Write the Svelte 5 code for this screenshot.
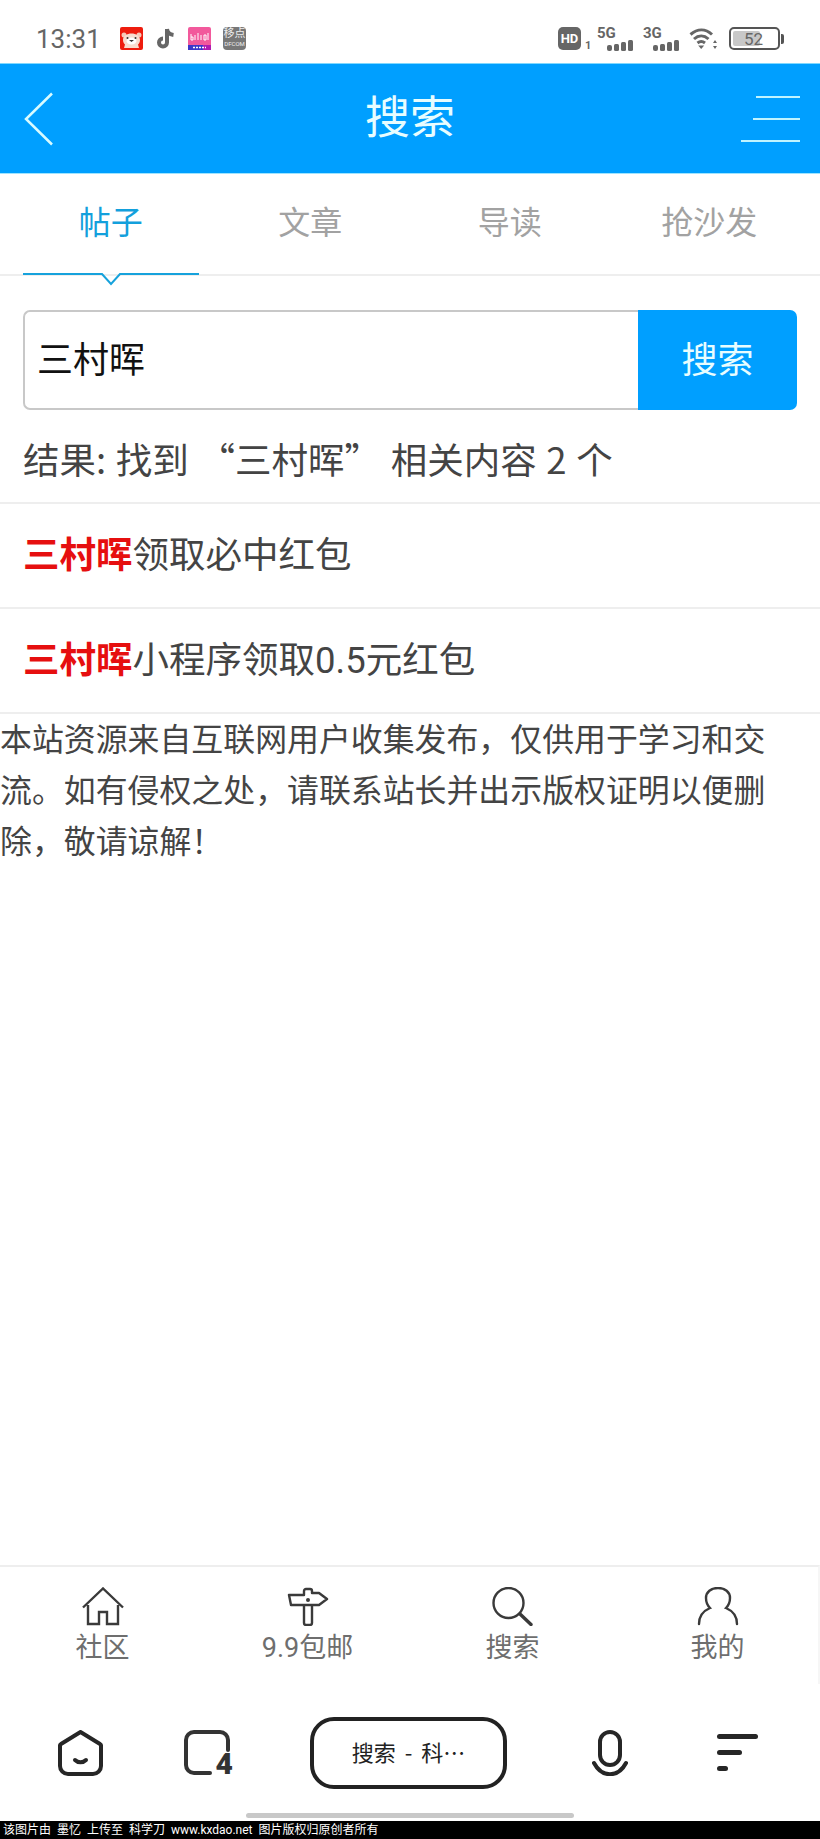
<script>
  const tabs = ['帖子', '文章', '导读', '抢沙发'];
  const results = ['领取必中红包', '小程序领取0.5元红包'];
  const nav = ['社区', '9.9包邮', '搜索', '我的'];
  const keyword = '三村晖';
</script>

<div class="page">
  <div class="status">
    <span class="time">13:31</span>
    <svg class="app first" viewBox="0 0 23 23">
      <rect width="23" height="23" rx="2" fill="#ee1c0e" />
      <circle cx="4" cy="8" r="2.500" fill="#f6c9b8" />
      <circle cx="19" cy="8" r="2.500" fill="#f6c9b8" />
      <path d="M3 13c0-4 4-6.500 8.500-6.500S20 9 20 13c0 2-1 3.500-2 4.500l1 3.500H4l1-3.500c-1-1-2-2.500-2-4.500z" fill="#f8dccf" />
      <ellipse cx="11.500" cy="14" rx="5" ry="3.500" fill="#fff" />
      <circle cx="7.500" cy="11" r="1" fill="#333" />
      <circle cx="15.500" cy="11" r="1" fill="#333" />
      <path d="M9 13h5l-2.500 2z" fill="#333" />
    </svg>
    <svg class="app tiktok" viewBox="0 0 18 23">
      <path d="M10 2v13.500a4 4 0 1 1-4-4M10 2c.5 3.500 3 5.500 6.500 6" fill="none" stroke="#666" stroke-width="4" />
    </svg>
    <svg class="app third" viewBox="0 0 23 23">
      <rect width="23" height="23" rx="2" fill="#f2599c" />
      <rect y="18" width="23" height="5" fill="#3b37c8" />
      <rect x="15" y="18" width="8" height="5" fill="#b01bb0" />
      <path d="M3 7v6h2v-3H3M7 8v5M10 6v7M13 8v5M16 8v5h2V8zM20 6v7" stroke="#fff" stroke-width="1" fill="none" />
      <path d="M5 20.500h13" stroke="#fff" stroke-width="1.500" stroke-dasharray="2 1" />
    </svg>
    <span class="grey-app"><span>移点</span><small>DFCOM</small></span>
    <span class="spacer"></span>
    <span class="hd">HD</span><span class="sim">1</span>
    <span class="signal">
      <b>5G</b>
      <svg viewBox="0 0 27 11">
        <rect x="0" y="5" width="5" height="6" rx="2" fill="#666" />
        <rect x="7" y="4" width="5" height="7" rx="1.500" fill="#666" />
        <rect x="14" y="2" width="5" height="9" rx="1.500" fill="#666" />
        <rect x="21" y="0" width="5" height="11" rx="1.500" fill="#666" />
      </svg>
    </span>
    <span class="signal">
      <b>3G</b>
      <svg viewBox="0 0 27 11">
        <rect x="0" y="5" width="5" height="6" rx="2" fill="#666" />
        <rect x="7" y="4" width="5" height="7" rx="1.500" fill="#666" />
        <rect x="14" y="2" width="5" height="9" rx="1.500" fill="#666" />
        <rect x="21" y="0" width="5" height="11" rx="1.500" fill="#666" />
      </svg>
    </span>
    <svg class="wifi" viewBox="0 0 29 23">
      <path d="M1.500 7.500c7-6 15-6 21.500 0M5 12c4.500-4 10-4 14.500 0M8.500 16c2.500-2 5-2 7.500 0" fill="none" stroke="#666" stroke-width="3" />
      <path d="M12.200 22l-3-3.500h6z" fill="#666" />
      <path d="M26 13l2 3h-4zM26 22l2-3h-4z" fill="#666" />
    </svg>
    <span class="battery"><i></i><em>52</em></span>
    <span class="nub"></span>
  </div>

  <header>
    <svg class="back" viewBox="0 0 30 54">
      <path d="M28 1.500 2 27l26 25.500" fill="none" stroke="#d8fbff" stroke-width="2.500" />
    </svg>
    <h1>搜索</h1>
    <div class="menu"><i class="m1"></i><i class="m2"></i><i class="m3"></i></div>
  </header>

  <nav class="tabs">
    {#each tabs as tab, i}
      <div class="tab" class:active={i === 0}>
        {tab}
        {#if i === 0}
          <svg class="notch" viewBox="0 0 176 13">
            <path d="M0 1h79l9 10 9-10h79" fill="none" stroke="#16a2dc" stroke-width="2" />
          </svg>
        {/if}
      </div>
    {/each}
  </nav>

  <main>
    <div class="search">
      <div class="field">{keyword}</div>
      <div class="go">搜索</div>
    </div>
    <p class="count">结果: 找到 “{keyword}” 相关内容 2 个</p>
    {#each results as r}
      <div class="row"><strong>{keyword}</strong>{r}</div>
    {/each}
    <p class="note">本站资源来自互联网用户收集发布，仅供用于学习和交流。如有侵权之处，请联系站长并出示版权证明以便删除，敬请谅解！</p>
  </main>

  <div class="nav">
    {#each nav as item, i}
      <div class="nav-item">
        {#if i === 0}
          <svg viewBox="0 0 42 39">
            <path d="M1 20.500 21 1.500l20 19M6 18v19h11V25h8v12h11V18" fill="none" stroke="#3a3a3a" stroke-width="2.400" />
          </svg>
        {:else if i === 1}
          <svg viewBox="0 0 42 39">
            <path d="M2 8h15V4a2 2 0 0 1 2-2h4a2 2 0 0 1 2 2v2h7l8 6-8 6H4zM17 18v18a2 2 0 0 0 2 2h4a2 2 0 0 0 2-2V18" fill="none" stroke="#3a3a3a" stroke-width="2.400" stroke-linejoin="round" />
            <circle cx="21" cy="13" r="2" fill="#3a3a3a" />
          </svg>
        {:else if i === 2}
          <svg viewBox="0 0 42 39">
            <circle cx="16.500" cy="16" r="15" fill="none" stroke="#3a3a3a" stroke-width="2.400" />
            <path d="M28 27l11 10.500" fill="none" stroke="#3a3a3a" stroke-width="3.400" stroke-linecap="round" />
          </svg>
        {:else}
          <svg viewBox="0 0 42 39">
            <path d="M2 37c0-8 4-13 11-16-3-3-4-6-4-10C9 5 14 1 21 1s12 4 12 10c0 4-1 7-4 10 7 3 11 8 11 16" fill="none" stroke="#3a3a3a" stroke-width="2.400" stroke-linecap="round" />
          </svg>
        {/if}
        <span>{item}</span>
      </div>
    {/each}
  </div>

  <div class="toolbar">
    <svg class="t-home" viewBox="0 0 45 46">
      <path d="M22.500 2 42 14a2 2 0 0 1 1 2v20a8 8 0 0 1-8 8H10a8 8 0 0 1-8-8V16a2 2 0 0 1 1-2z" fill="none" stroke="#262626" stroke-width="4" stroke-linejoin="round" />
      <path d="M17 30c3 3 8 3 11 0" fill="none" stroke="#262626" stroke-width="4" stroke-linecap="round" />
    </svg>
    <div class="t-tabs">
      <svg viewBox="0 0 49 46">
        <path d="M26 43H10a8 8 0 0 1-8-8V10a8 8 0 0 1 8-8h26a8 8 0 0 1 8 8v10" fill="none" stroke="#333" stroke-width="4" stroke-linecap="round" />
      </svg>
      <b>4</b>
    </div>
    <div class="pill">搜索 - 科⋯</div>
    <svg class="t-mic" viewBox="0 0 36 46">
      <rect x="8" y="2" width="20" height="33" rx="10" fill="none" stroke="#262626" stroke-width="4" />
      <path d="M2 33c8 15 24 15 32 0" fill="none" stroke="#262626" stroke-width="4" stroke-linecap="round" />
    </svg>
    <div class="t-menu"><i class="l1"></i><i class="l2"></i><i class="l3"></i></div>
  </div>

  <div class="indicator"></div>
  <div class="credit">该图片由 墨忆 上传至 科学刀 www.kxdao.net 图片版权归原创者所有</div>
</div>

<style>
  :global(body) {
    margin: 0;
    background: #fff;
  }

  .page {
    width: 820px;
    height: 1839px;
    display: flex;
    flex-direction: column;
    font-family: Roboto, "Noto Sans CJK SC", sans-serif;
    color: #444;
    overflow: hidden;
  }

  .status {
    height: 63px;
    flex: none;
    display: flex;
    align-items: center;
    padding: 14px 39px 0 36px;
    box-sizing: border-box;
    color: #666;
  }

  .time {
    font-size: 26px;
    width: 84px;
  }

  .app {
    height: 23px;
    width: 23px;
  }

  .tiktok {
    width: 18px;
    margin-left: 14px;
  }

  .third {
    margin-left: 13px;
  }

  .grey-app {
    width: 23px;
    height: 23px;
    margin-left: 12px;
    border-radius: 4px;
    background: #777;
    color: #eee;
    display: flex;
    flex-direction: column;
    align-items: center;
    overflow: hidden;
    font-size: 11px;
    line-height: 13px;
    white-space: nowrap;
  }

  .grey-app small {
    font-size: 6px;
    line-height: 7px;
  }

  .spacer {
    flex: 1;
  }

  .hd {
    width: 23px;
    height: 23px;
    border-radius: 5px;
    background: #666;
    color: #fff;
    font-size: 13px;
    font-weight: 700;
    line-height: 23px;
    text-align: center;
  }

  .sim {
    font-size: 11px;
    line-height: 11px;
    align-self: flex-end;
    margin: 0 0 12px 4px;
    width: 12px;
    font-weight: 700;
  }

  .signal {
    width: 37px;
    height: 24px;
    margin-right: 9px;
    position: relative;
  }

  .signal b {
    font-size: 15px;
    line-height: 13px;
    display: block;
  }

  .signal svg {
    position: absolute;
    right: 0;
    bottom: 0;
    width: 27px;
    height: 11px;
  }

  .wifi {
    width: 29px;
    height: 23px;
  }

  .battery {
    width: 51px;
    height: 23px;
    margin-left: 11px;
    box-sizing: border-box;
    border: 2px solid #555;
    border-radius: 5px;
    position: relative;
    padding: 2px;
  }

  .battery i {
    display: block;
    width: 27px;
    height: 100%;
    background: #c8c8c8;
    border-radius: 2px;
  }

  .battery em {
    position: absolute;
    left: 13px;
    top: -1px;
    font-style: normal;
    font-size: 17px;
    line-height: 22px;
    color: #666;
  }

  .nub {
    width: 3px;
    height: 10px;
    background: #555;
    border-radius: 0 2px 2px 0;
    margin-right: -3px;
    margin-left: 1px;
  }

  header {
    height: 111px;
    flex: none;
    background: #009fff;
    border-top: 1px solid #7fd8ff;
    border-bottom: 1px solid #9fe4ff;
    box-sizing: border-box;
    display: grid;
    grid-template-columns: 1fr auto 1fr;
    align-items: center;
    padding: 0 20px 0 24px;
  }

  .back {
    width: 30px;
    height: 54px;
  }

  h1 {
    margin: 0 0 0 -4px;
    font-size: 45px;
    font-weight: 400;
    color: #e8fdff;
    line-height: 1;
  }

  .menu {
    display: flex;
    flex-direction: column;
    align-items: flex-end;
    gap: 20px;
  }

  .menu i {
    display: block;
    height: 2px;
    background: #bff3ff;
  }

  .m1 {
    width: 44px;
  }

  .m2 {
    width: 47px;
  }

  .m3 {
    width: 59px;
  }

  .tabs {
    height: 102px;
    flex: none;
    box-sizing: border-box;
    padding: 0 11px;
    display: grid;
    grid-template-columns: repeat(4, 1fr);
    border-bottom: 2px solid #eee;
  }

  .tab {
    font-size: 32px;
    color: #a2a2a2;
    text-align: center;
    line-height: 98px;
    position: relative;
  }

  .tab.active {
    color: #13a0dc;
  }

  .notch {
    position: absolute;
    left: 12px;
    bottom: -12px;
    width: 176px;
    height: 13px;
  }

  main {
    flex: 1;
    padding-top: 34px;
  }

  .search {
    margin: 0 23px;
    height: 100px;
    display: flex;
  }

  .field {
    flex: 1;
    box-sizing: border-box;
    border: 2px solid #c8c8c8;
    border-right: 0;
    border-radius: 7px 0 0 7px;
    padding-left: 12px;
    font-size: 36px;
    line-height: 98px;
    color: #111;
  }

  .go {
    width: 159px;
    background: #009fff;
    color: #e8fdff;
    font-size: 36px;
    line-height: 102px;
    text-align: center;
    border-radius: 0 7px 7px 0;
  }

  .count {
    margin: 0;
    height: 92px;
    box-sizing: border-box;
    padding-left: 23px;
    font-family: "Noto Sans CJK SC", sans-serif;
    font-size: 36.500px;
    word-spacing: 1.500px;
    line-height: 98px;
  }

  .row {
    height: 105px;
    box-sizing: border-box;
    border-top: 2px solid #eee;
    padding-left: 23px;
    font-size: 36.500px;
    line-height: 103px;
  }

  .row strong {
    color: #e60f0f;
    font-weight: 700;
  }

  .note {
    margin: 0;
    border-top: 2px solid #eee;
    font-size: 31.900px;
    line-height: 51px;
    padding: 1px 48px 0 0;
  }

  .nav {
    height: 119px;
    flex: none;
    box-sizing: border-box;
    border-top: 2px solid #eee;
    border-right: 2px solid #f6f6f6;
    display: grid;
    grid-template-columns: repeat(4, 205px);
  }

  .nav-item {
    display: flex;
    flex-direction: column;
    align-items: center;
    padding-top: 20px;
    font-size: 27px;
    color: #6e6e6e;
  }

  .nav-item svg {
    width: 42px;
    height: 39px;
    flex: none;
  }

  .nav-item span {
    line-height: 36px;
    margin-top: 4px;
  }

  .toolbar {
    height: 129px;
    flex: none;
    display: flex;
    align-items: center;
    padding: 8px 0 0 58px;
    box-sizing: border-box;
  }

  .t-home {
    width: 45px;
    height: 46px;
  }

  .t-tabs {
    width: 49px;
    height: 46px;
    margin-left: 81px;
    position: relative;
  }

  .t-tabs svg {
    width: 49px;
    height: 46px;
    display: block;
  }

  .t-tabs b {
    position: absolute;
    right: 0;
    bottom: 1px;
    font-size: 30px;
    line-height: 22px;
    font-weight: 900;
    color: #333;
  }

  .pill {
    width: 197px;
    height: 72px;
    box-sizing: border-box;
    margin-left: 77px;
    border: 4px solid #222;
    border-radius: 24px;
    font-family: "Noto Sans CJK SC", sans-serif;
    font-size: 22px;
    word-spacing: 4px;
    line-height: 60px;
    text-align: center;
    color: #222;
  }

  .t-mic {
    width: 36px;
    height: 46px;
    margin-left: 85px;
  }

  .t-menu {
    width: 41px;
    margin-left: 89px;
    display: flex;
    flex-direction: column;
    gap: 11px;
  }

  .t-menu i {
    display: block;
    height: 5px;
    border-radius: 3px;
    background: #262626;
  }

  .l1 {
    width: 41px;
  }

  .l2 {
    width: 25px;
  }

  .l3 {
    width: 11px;
  }

  .indicator {
    width: 328px;
    height: 5px;
    flex: none;
    margin: 0 0 3px 246px;
    border-radius: 3px;
    background: #c8c8c8;
  }

  .credit {
    height: 18px;
    flex: none;
    background: #000;
    color: #fff;
    font-size: 12px;
    word-spacing: 3px;
    line-height: 18px;
    padding-left: 3px;
    white-space: nowrap;
  }
</style>
